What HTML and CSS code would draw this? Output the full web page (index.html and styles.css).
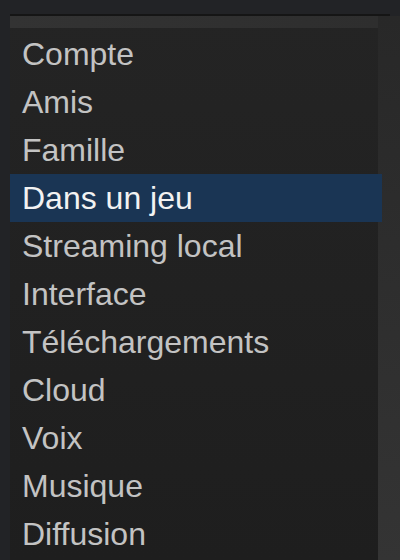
FILE: index.html
```html
<!DOCTYPE html>
<html lang="fr">
<head>
    <meta charset="UTF-8">
    <meta name="viewport" content="width=device-width, initial-scale=1.0">
    <title>Paramètres</title>
    <link rel="stylesheet" href="styles.css">
</head>
<body>
    <div class="window">
        <div class="top-line"></div>
        <div class="main">
            <div class="panel">
                <div class="panel-header"></div>
                <ul class="menu">
                    <li class="item">Compte</li>
                    <li class="item">Amis</li>
                    <li class="item">Famille</li>
                    <li class="item selected">Dans un jeu</li>
                    <li class="item">Streaming local</li>
                    <li class="item">Interface</li>
                    <li class="item">Téléchargements</li>
                    <li class="item">Cloud</li>
                    <li class="item">Voix</li>
                    <li class="item">Musique</li>
                    <li class="item">Diffusion</li>
                </ul>
            </div>
            <div class="side"></div>
        </div>
    </div>
</body>
</html>
```

FILE: styles.css
```css
body {
    margin: 0;
    padding: 0;
    background-color: #222326;
    font-family: "Liberation Sans", Arial, sans-serif;
    overflow: hidden;
}

.window {
    height: 560px;
    display: flex;
    flex-direction: column;
    padding-top: 14px;
    box-sizing: border-box;
}

.top-line {
    height: 2px;
    margin: 0 10px;
    background-color: #151515;
}

.main {
    flex: 1;
    display: flex;
    margin-left: 10px;
    background: linear-gradient(to bottom, #232323, #222222);
}

.panel {
    width: 368px;
    background: linear-gradient(to bottom, #242424, #1e1e1e);
}

.panel-header {
    height: 12px;
    background: linear-gradient(to right, #333333, #2e2e2e);
}

.side {
    flex: 1;
    background: linear-gradient(to bottom, #282828, #343434);
}

.menu {
    list-style: none;
    margin: 0;
    padding: 2px 0 0;
}

.item {
    height: 48px;
    line-height: 48px;
    padding-left: 12px;
    font-size: 32px;
    color: #c3c3c3;
    white-space: nowrap;
}

.selected {
    position: relative;
    margin-right: -4px;
    background-color: #1a3554;
    color: #f2f2f2;
}
```
